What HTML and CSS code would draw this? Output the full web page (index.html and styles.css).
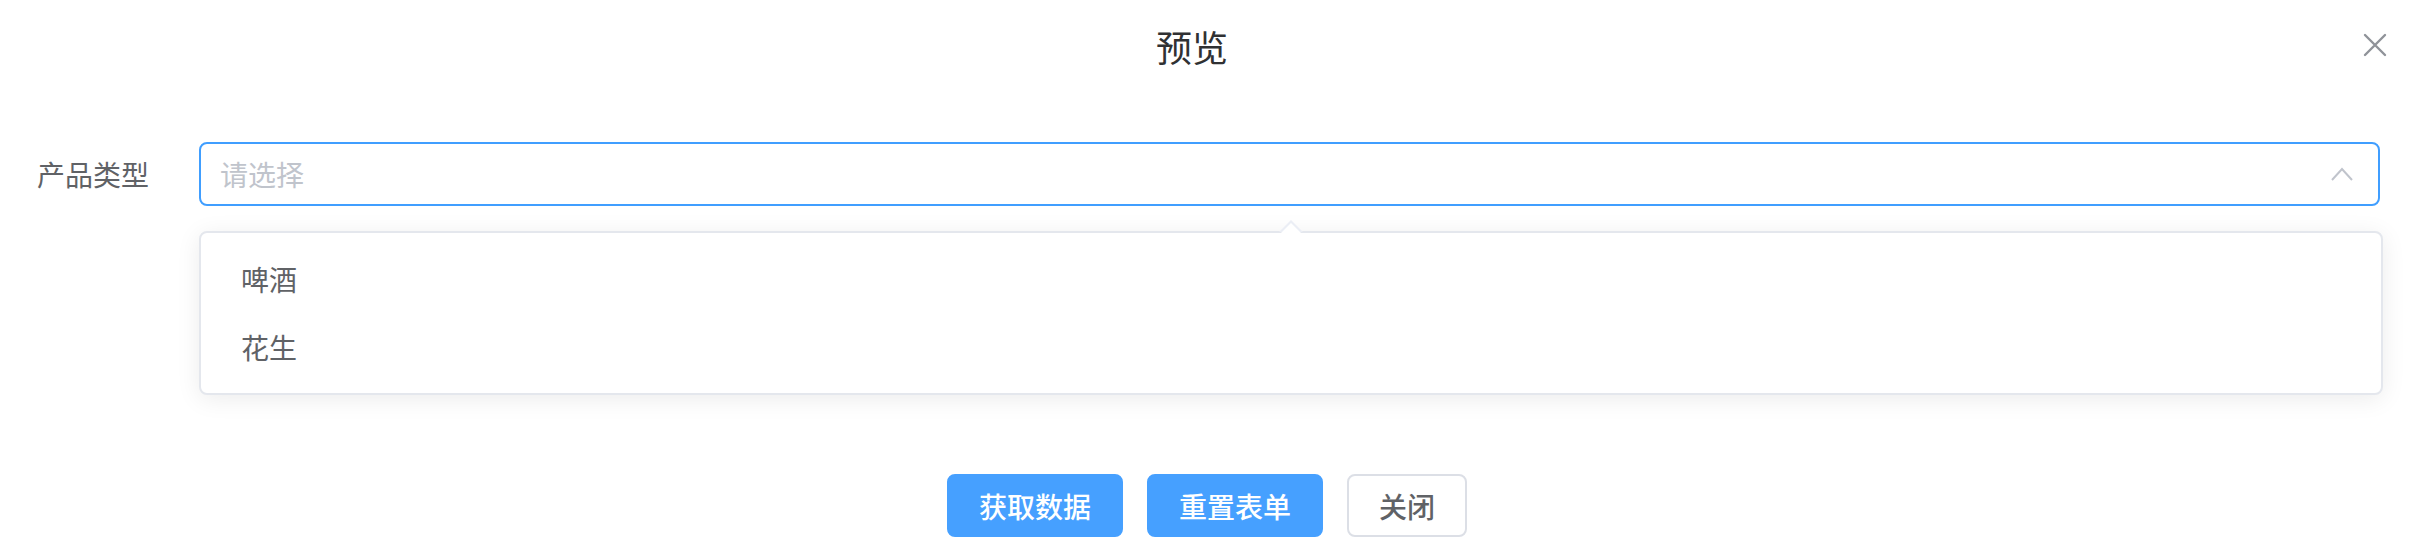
FILE: index.html
```html
<!DOCTYPE html>
<html lang="zh">
<head>
<meta charset="utf-8">
<title>预览</title>
<link rel="stylesheet" href="styles.css">
</head>
<body>
<div class="dialog">
  <div class="dialog-header">
    <span class="dialog-title">预览</span>
    <button class="dialog-close" type="button" aria-label="Close">
      <svg width="24" height="24" viewBox="0 0 24 24"><path d="M2 2 L22 22 M22 2 L2 22" stroke="#909399" stroke-width="2.4" fill="none" stroke-linecap="round"/></svg>
    </button>
  </div>
  <div class="dialog-body">
    <div class="form-item">
      <label class="form-label">产品类型</label>
      <div class="select">
        <div class="select-input">
          <span class="placeholder">请选择</span>
          <svg class="caret" width="24" height="16" viewBox="0 0 24 16"><polyline points="2,14 12,3 22,14" fill="none" stroke="#C0C4CC" stroke-width="2"/></svg>
        </div>
        <div class="dropdown">
          <div class="dropdown-arrow"></div>
          <ul class="dropdown-list">
            <li class="dropdown-item">啤酒</li>
            <li class="dropdown-item">花生</li>
          </ul>
        </div>
      </div>
    </div>
  </div>
  <div class="dialog-footer">
    <button class="btn btn-primary" type="button">获取数据</button>
    <button class="btn btn-primary" type="button">重置表单</button>
    <button class="btn btn-default" type="button">关闭</button>
  </div>
</div>
</body>
</html>
```

FILE: styles.css
```css
html, body {
  margin: 0;
  padding: 0;
  background: #ffffff;
}

body {
  font-family: "Noto Sans CJK SC", "Noto Sans", "Liberation Sans", sans-serif;
  color: #606266;
}

.dialog {
  position: relative;
  width: 2414px;
}

.dialog-header {
  position: relative;
  padding: 22px 70px 0 40px;
  text-align: center;
}

.dialog-title {
  display: inline-block;
  font-size: 36px;
  line-height: 48px;
  color: #303133;
}

.dialog-close {
  position: absolute;
  top: 33px;
  right: 27px;
  width: 24px;
  height: 24px;
  padding: 0;
  border: 0;
  background: transparent;
  display: flex;
  align-items: center;
  justify-content: center;
}

.dialog-body {
  padding: 72px 0 0 37px;
  height: 404px;
  box-sizing: border-box;
}

.form-item {
  display: flex;
  align-items: center;
}

.form-label {
  width: 162px;
  font-size: 28px;
  line-height: 64px;
  color: #606266;
}

.select {
  position: relative;
  width: 2181px;
}

.select-input {
  height: 64px;
  box-sizing: border-box;
  border: 2px solid #409EFF;
  border-radius: 8px;
  display: flex;
  align-items: center;
  justify-content: space-between;
  padding: 0 24px 0 19px;
}

.placeholder {
  font-size: 28px;
  color: #C0C4CC;
}

.caret {
  display: block;
}

.dropdown {
  position: absolute;
  top: 89px;
  left: 0;
  width: 2184px;
  box-sizing: border-box;
  background: #fff;
  border: 2px solid #E4E7ED;
  border-radius: 8px;
  box-shadow: 0 4px 24px rgba(0, 0, 0, 0.08);
}

.dropdown-arrow {
  position: absolute;
  top: -13px;
  left: 1078px;
  width: 0;
  height: 0;
  border-left: 12px solid transparent;
  border-right: 12px solid transparent;
  border-bottom: 12px solid #EBEEF5;
}

.dropdown-arrow::after {
  content: "";
  position: absolute;
  left: -10px;
  top: 3px;
  border-left: 10px solid transparent;
  border-right: 10px solid transparent;
  border-bottom: 10px solid #fff;
}

.dropdown-list {
  list-style: none;
  margin: 0;
  padding: 12px 0;
}

.dropdown-item {
  height: 68px;
  line-height: 68px;
  padding: 0 40px;
  font-size: 28px;
  color: #606266;
}

.dialog-footer {
  display: flex;
  justify-content: center;
  gap: 24px;
}

.btn {
  height: 63px;
  box-sizing: border-box;
  padding: 0 30px;
  font-family: inherit;
  font-size: 28px;
  font-weight: 500;
  border-radius: 8px;
  border: 2px solid;
}

.btn-primary {
  background: #46A0FF;
  border-color: #46A0FF;
  color: #fff;
}

.btn-default {
  background: #fff;
  border-color: #DCDFE6;
  color: #606266;
}
```
